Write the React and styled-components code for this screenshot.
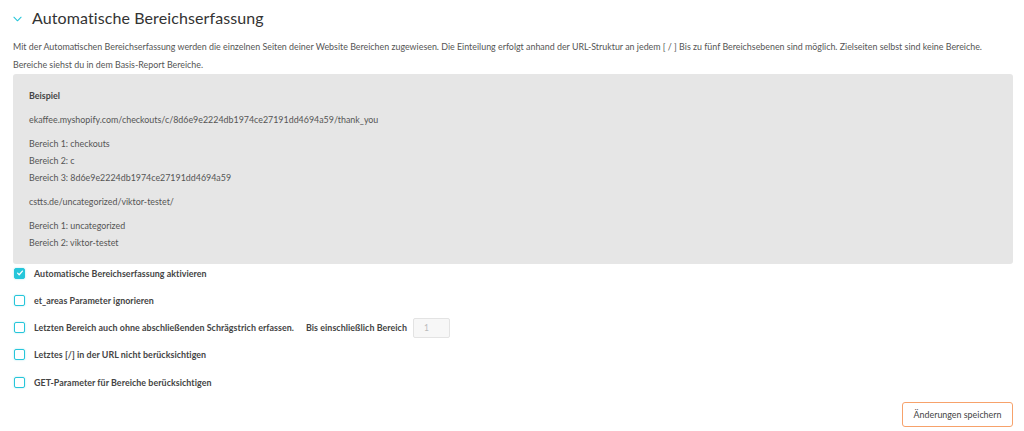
import React from 'react'
import styled, { createGlobalStyle } from 'styled-components'

const GlobalStyle = createGlobalStyle`
  html, body {
    margin: 0;
    padding: 0;
    background: #fff;
  }
  body {
    font-family: Lato, 'Open Sans', sans-serif;
    color: #555;
  }
`

const OPTIONS = [
  { id: 'auto', label: 'Automatische Bereichserfassung aktivieren', checked: true },
  { id: 'ignore', label: 'et_areas Parameter ignorieren' },
  { id: 'last', label: 'Letzten Bereich auch ohne abschließenden Schrägstrich erfassen.', extra: true },
  { id: 'slash', label: 'Letztes [/] in der URL nicht berücksichtigen' },
  { id: 'get', label: 'GET-Parameter für Bereiche berücksichtigen' },
]

export default function App() {
  return (
    <>
      <GlobalStyle />
      <Page>
        <Header>
          <Chevron viewBox="0 0 10 6">
            <path d="M1 1l4 4 4-4" fill="none" stroke="#26c6da" strokeWidth="1.2" strokeLinecap="round" strokeLinejoin="round" />
          </Chevron>
          <Title>Automatische Bereichserfassung</Title>
        </Header>
        <Intro>
          Mit der Automatischen Bereichserfassung werden die einzelnen Seiten deiner Website Bereichen zugewiesen. Die Einteilung erfolgt anhand der URL-Struktur an jedem [ / ] Bis zu fünf Bereichsebenen sind möglich. Zielseiten selbst sind keine Bereiche.
          <br />
          Bereiche siehst du in dem Basis-Report Bereiche.
        </Intro>
        <ExampleBox>
          <ExampleTitle>Beispiel</ExampleTitle>
          <Url>ekaffee.myshopify.com/checkouts/c/8d6e9e2224db1974ce27191dd4694a59/thank_you</Url>
          <AreaList>
            <Line>Bereich 1: checkouts</Line>
            <Line>Bereich 2: c</Line>
            <Line>Bereich 3: 8d6e9e2224db1974ce27191dd4694a59</Line>
          </AreaList>
          <Url>cstts.de/uncategorized/viktor-testet/</Url>
          <AreaList>
            <Line>Bereich 1: uncategorized</Line>
            <Line>Bereich 2: viktor-testet</Line>
          </AreaList>
        </ExampleBox>
        <Options>
          {OPTIONS.map((o) => (
            <OptionRow key={o.id}>
              <Box $checked={o.checked}>
                {o.checked && (
                  <svg viewBox="0 0 10 10" width="8" height="8">
                    <path d="M2 5.2l2 2 4-4.6" fill="none" stroke="#fff" strokeWidth="1.6" strokeLinecap="round" strokeLinejoin="round" />
                  </svg>
                )}
              </Box>
              <OptionLabel>{o.label}</OptionLabel>
              {o.extra && (
                <Extra>
                  <OptionLabel>Bis einschließlich Bereich</OptionLabel>
                  <NumberInput>1</NumberInput>
                </Extra>
              )}
            </OptionRow>
          ))}
        </Options>
        <Footer>
          <SaveButton>Änderungen speichern</SaveButton>
        </Footer>
      </Page>
    </>
  )
}

const Page = styled.main`
  padding: 0 11px 0 13px;
  width: 1024px;
  box-sizing: border-box;
`

const Header = styled.div`
  display: flex;
  align-items: center;
  gap: 10px;
  height: 34px;
`

const Chevron = styled.svg`
  width: 9px;
  height: 6px;
  margin-top: 3px;
`

const Title = styled.h1`
  margin: 0;
  font-size: 16px;
  font-weight: 400;
  color: #333;
  letter-spacing: 0.1px;
`

const Intro = styled.p`
  margin: 4px 0 0;
  font-size: 8.9px;
  line-height: 18px;
  color: #555;
`

const ExampleBox = styled.section`
  background: #e6e6e6;
  border-radius: 3px;
  padding: 13px 16px 13px;
  display: flex;
  flex-direction: column;
  gap: 7px;
  font-size: 8.9px;
`

const ExampleTitle = styled.strong`
  font-weight: 700;
  color: #444;
  line-height: 17px;
`

const Url = styled.div`
  line-height: 17px;
`

const AreaList = styled.div`
  display: flex;
  flex-direction: column;
`

const Line = styled.div`
  line-height: 17px;
`

const Options = styled.div`
  display: flex;
  flex-direction: column;
  gap: 9.3px;
`

const OptionRow = styled.label`
  display: flex;
  align-items: center;
  height: 18px;
`

const Box = styled.span`
  width: 9px;
  height: 9px;
  border: 1px solid #26c6da;
  border-radius: 2px;
  background: ${(p) => (p.$checked ? '#26c6da' : '#fff')};
  display: flex;
  align-items: center;
  justify-content: center;
  margin: 0 9px 0 1px;
  box-shadow: 0 0 2px rgba(38, 198, 218, 0.4);
`

const OptionLabel = styled.span`
  font-size: 8.9px;
  font-weight: 700;
  color: #444;
  letter-spacing: 0.05px;
`

const Extra = styled.span`
  display: flex;
  align-items: center;
  gap: 6px;
  margin-left: 12px;
`

const NumberInput = styled.span`
  width: 37px;
  height: 20px;
  box-sizing: border-box;
  border: 1px solid #e3e3e3;
  border-radius: 2px;
  background: #f7f7f7;
  font-size: 8.5px;
  color: #bbb;
  padding: 4px 10px;
`

const Footer = styled.div`
  display: flex;
  justify-content: flex-end;
  margin-top: 11px;
`

const SaveButton = styled.button`
  width: 111px;
  height: 25px;
  background: #fff;
  border: 1px solid #f7a26b;
  border-radius: 3px;
  font-family: Lato, sans-serif;
  font-size: 8.9px;
  color: #444;
  cursor: pointer;
`
